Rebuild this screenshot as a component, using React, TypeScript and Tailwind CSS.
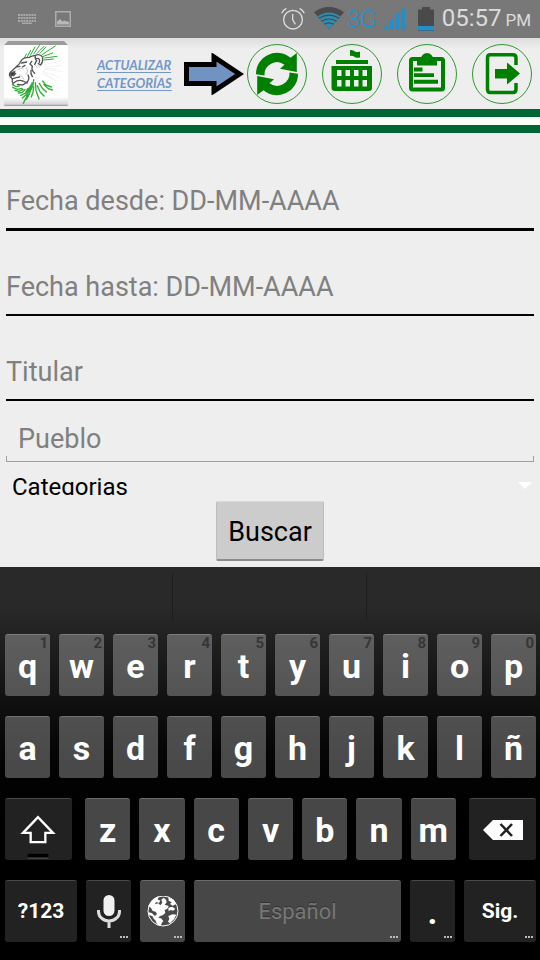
import type { ReactNode } from "react";

const NUMBER_ROW = ["q", "w", "e", "r", "t", "y", "u", "i", "o", "p"];
const HOME_ROW = ["a", "s", "d", "f", "g", "h", "j", "k", "l", "ñ"];
const BOTTOM_ROW = ["z", "x", "c", "v", "b", "n", "m"];

function StatusBar() {
  return (
    <div className="flex h-[38px] items-center bg-[#787878] pl-[18px] pr-[9px] text-[#dcdcdc]">
      <svg className="h-[10px] w-[18px]" viewBox="0 0 18 10" fill="none" stroke="#a9a9a9" strokeWidth="2">
        <path d="M0 1H18M0 4H18M0 7H18" strokeDasharray="2 0.7" />
        <path d="M4 9.3H14" strokeWidth="1.5" />
      </svg>
      <svg className="ml-[19px] h-4 w-4" viewBox="0 0 16 16">
        <rect x="0.75" y="0.75" width="14.5" height="14.5" fill="none" stroke="#adadad" strokeWidth="1.5" />
        <path d="M2 13.5V10.5L5 8L7.5 10.5L9.5 9.3L11 10.5L12.5 10L14 11.5V13.5Z" fill="#b8b8b8" />
      </svg>
      <div className="ml-auto flex items-center">
        <svg className="h-6 w-6" viewBox="38 24 72 72" fill="none" stroke="#dcdcdc" strokeWidth="4">
          <circle cx="74" cy="62" r="28" />
          <path d="M73 45V62L81 76M40 43A32 32 0 0 1 54 28M94 28A32 32 0 0 1 108 43" />
        </svg>
        <svg className="ml-[9px] h-[24px] w-[30px]" viewBox="135 19 90 72" fill="none">
          <path d="M180 86L135 35Q180 2 225 35Z" fill="#4b4b4b" />
          <path d="M180 86L146 47Q180 24 214 47Z" fill="#348bb0" />
          <path d="M150 53Q180 34 210 53M158 62Q180 48 202 62M166 71Q180 62 194 71" stroke="#404a50" strokeWidth="3.5" />
        </svg>
        <span className="ml-[3px] font-[Roboto,sans-serif] text-[24px] font-light leading-8 text-[#1f92d0]">3G</span>
        <svg className="ml-1 h-6 w-[25px]" viewBox="333 19 74 72" fill="#218fcb">
          <path d="M333 88L352 70V88ZM359 88V61L370 51V88ZM376 88V44L388 33V88ZM393 88V29L406 19V88Z" />
        </svg>
        <svg className="ml-3 h-6 w-4" viewBox="0 0 16 24">
          <path d="M0 2.5H4V0H12V2.5H16V24H0Z" fill="#4a4a4a" />
          <rect y="19" width="16" height="4.5" fill="#218fcb" />
        </svg>
        <span className="ml-2 flex items-baseline gap-1 font-[Roboto,sans-serif]">
          <span className="text-[24px] leading-8">05:57</span>
          <span className="text-[17px] leading-8">PM</span>
        </span>
      </div>
    </div>
  );
}

function LionLogo() {
  return (
    <svg className="h-[65px] w-16 shrink-0" viewBox="12 6 192 195" fill="none" strokeLinecap="round">
      <defs>
        <linearGradient id="logo-base" x1="0" y1="0" x2="0" y2="1">
          <stop offset="0" stopColor="#ffffff" />
          <stop offset="0.86" stopColor="#ffffff" />
          <stop offset="1" stopColor="#cccccc" />
        </linearGradient>
      </defs>
      <rect x="12" y="15" width="192" height="185" rx="5" fill="url(#logo-base)" />
      <path d="M12 18L24 6H192L204 18Z" fill="#9c9c9c" />
      <path d="M14 199H202" stroke="#999999" strokeWidth="3" />
      <g stroke="#ececec" strokeWidth="2">
        <path d="M132 70L165 54M134 77L184 66M134 84L187 80M132 91L186 97M130 98L180 115M128 104L172 128M136 88L166 90M134 102L160 122" />
      </g>
      <g stroke="#2fae35" strokeWidth="4">
        <path d="M73 57L79 45M82 53L92 34M91 49L105 24M101 45L119 18M111 43L132 22M120 43L138 24M126 47L166 21M130 52L158 42M134 57L171 52M132 63L160 60" strokeWidth="3" />
        <path d="M37 137L48 143L58 141M38 145L52 151L66 148M45 154L57 157L69 151M55 162L67 160L75 151M62 169L76 163L83 149M67 177L80 166L88 145M70 193L82 169L92 139M79 181L88 166L96 132M90 158L99 139L101 122M106 131L108 155L117 180M112 140L121 160L132 171M118 133L127 148L139 159M128 126L137 138L154 144M132 137L145 149L157 153M101 144L99 159L94 174" />
      </g>
      <g stroke="#555555" strokeWidth="4">
        <path d="M63 66Q69 55 87 55Q96 50 106 49M106 49Q120 43 128 55Q130 68 122 78L115 74M110 58Q121 57 118 70M106 49Q104 60 110 65L104 76M63 66Q59 76 49 83L30 101Q26 108 31 114M30 107L41 110L47 103M49 84L60 82M65 72L80 69M67 84L75 79M95 67L90 75L97 82M97 82Q93 94 104 103M33 115L36 120L49 116L59 114M37 121Q35 129 40 135M42 131Q55 121 69 126L82 132M52 136L68 138L83 128M84 108Q89 116 84 126M93 94Q91 103 97 113" />
        <path d="M31 103L44 98L42 107L34 111Z" fill="#303030" />
        <path d="M54 91Q64 84 70 90M58 107Q67 112 72 121M80 85L83 98L77 107M107 79L112 86M113 79L119 84" stroke="#aaaaaa" strokeWidth="2" />
      </g>
    </svg>
  );
}

function HeaderButton({ label, children }: { label: string; children: ReactNode }) {
  return (
    <button type="button" aria-label={label} className="size-[60px] shrink-0 rounded-full">
      <svg className="size-[60px]" viewBox="0 0 60 60" fill="#008000">
        <circle cx="30" cy="30" r="29.5" fill="none" stroke="#2f992f" />
        {children}
      </svg>
    </button>
  );
}

function Header() {
  const arc = "M9 30.3A21 21 0 0 1 43.500 13.800L49.8 9V28L33 24.800L37.500 20.800A12.500 12.500 0 0 0 17.500 31.500Z";
  return (
    <header>
      <div className="flex h-[71px] items-center bg-linear-to-b from-[#dedede] to-[#eeeeee] to-15% pl-1 pr-2">
        <LionLogo />
        <a
          href="#actualizar"
          className="ml-auto w-[84px] font-[Lato,sans-serif] text-[13px] font-bold italic leading-[18px] text-[#7397c8] underline underline-offset-2"
        >
          ACTUALIZAR CATEGORÍAS
        </a>
        <svg className="ml-[3px] h-[42px] w-[60px] shrink-0" viewBox="184 54 60 42">
          <path d="M186.5 65.5H214V58L239.5 75L214 92V84.500H186.5Z" fill="#7093c2" stroke="#000" strokeWidth="5" />
        </svg>
        <div className="ml-[3px] flex gap-[15px]">
          <HeaderButton label="Actualizar categorías">
            <path d={arc} />
            <path d={arc} transform="rotate(180 30 30)" />
          </HeaderButton>
          <HeaderButton label="Edificio">
            <path d="M28 6Q31 5.500 33 7.500Q35 8.500 38 7.500V13.500Q34 14.500 32 12.500Q30 11.500 28 12ZM14 16H46V20H14Z" />
            <path
              fillRule="evenodd"
              d="M9.500 22H50V44Q50 47 47 47H13Q9.500 47 9.500 44ZM15 26V32H19.500V26ZM23.500 26V32H28V26ZM32 26V32H36.500V26ZM40.500 26V32H45V26ZM15 36V42.500H19.500V36ZM23.500 36V42.500H28V36ZM32 36V42.500H36.500V36ZM40.500 36V42.500H45V36Z"
            />
          </HeaderButton>
          <HeaderButton label="Portapapeles">
            <rect x="14" y="15" width="32" height="30.500" rx="1.500" fill="none" stroke="#008000" strokeWidth="4" />
            <path
              fillRule="evenodd"
              d="M20 21.500V16H23Q25 9 30 9Q35 9 37 16H40V21.500ZM30 12.700A2.300 2.300 0 1 0 30 17.300A2.300 2.300 0 1 0 30 12.700Z"
            />
            <path d="M17 23.500H25.500V27.500H17ZM17 29.300H37V33H17ZM17 35.700H41V39.700H17Z" />
          </HeaderButton>
          <HeaderButton label="Salir">
            <path
              d="M44 21V14Q44 10.700 41 10.700H18Q15.500 10.700 15.500 14V45Q15.500 48.500 18 48.500H41Q44 48.500 44 45V39"
              fill="none"
              stroke="#008000"
              strokeWidth="3.500"
            />
            <path d="M23 25H35V18.500L48 29.500L35 40.500V34.500H23Z" />
          </HeaderButton>
        </div>
      </div>
      <div className="h-6 border-y-8 border-[#006633] bg-[#fbfffa]" />
    </header>
  );
}

function SearchForm() {
  const field =
    "box-content h-[54px] w-full border-black font-[Roboto,sans-serif] text-[27px] text-black outline-none placeholder:text-[#808080]";
  return (
    <form className="bg-[#eeeeee] pb-[6px] pt-[41px]">
      <div className="flex flex-col gap-[29px] px-[6px]">
        <input aria-label="Fecha desde" placeholder="Fecha desde: DD-MM-AAAA" className={`${field} border-b-3`} />
        <input aria-label="Fecha hasta" placeholder="Fecha hasta: DD-MM-AAAA" className={`${field} border-b-2`} />
        <input aria-label="Titular" placeholder="Titular" className={`${field} border-b-2`} />
      </div>
      <div className="relative mx-[6px] mt-[15px]">
        <input
          aria-label="Pueblo"
          placeholder="Pueblo"
          className="h-[46px] w-full px-3 font-[Roboto,sans-serif] text-[27px] text-black outline-none placeholder:text-[#808080]"
        />
        <span className="pointer-events-none absolute inset-x-0 bottom-0 h-[6px] border-x border-b border-[#a0a0a0]" />
      </div>
      <div className="relative h-[33px] overflow-hidden">
        <select
          aria-label="Categorias"
          className="h-[50px] w-full appearance-none px-3 font-[Roboto,sans-serif] text-[24px] text-black outline-none"
        >
          <option>Categorias</option>
        </select>
        <svg className="pointer-events-none absolute right-2 top-5 h-[7px] w-[14px]" viewBox="0 0 14 7" fill="#fff">
          <path d="M0 0H14L7 7Z" />
        </svg>
      </div>
      <button
        type="button"
        className="mx-auto mt-[6px] block h-[60px] rounded-xs border-x border-b-2 border-t border-x-[#bdbdbd] border-b-[#8c8c8c] border-t-[#dadada] bg-[#cccccc] px-[11px] pt-1 font-[Roboto,sans-serif] text-[27px] text-black"
      >
        Buscar
      </button>
    </form>
  );
}

type KeyProps = {
  children: ReactNode;
  dark?: boolean;
  hint?: string;
  more?: boolean;
  label?: string;
};

function Key({ children, dark, hint, more, label }: KeyProps) {
  const tone = dark ? "bg-[#222222] border-[#484848]" : "bg-white/28 border-white/20";
  return (
    <button
      type="button"
      aria-label={label}
      className={`relative flex h-[62px] min-w-0 flex-1 items-center justify-center rounded-[3px] border-t ${tone}`}
    >
      {children}
      {hint && <span className="absolute right-[2px] top-0 text-[15px] font-bold leading-4 text-[#363636]">{hint}</span>}
      {more && (
        <span className="absolute bottom-1 right-[3px] flex gap-px">
          <span className="size-[2px] bg-[#bbbbbb]" />
          <span className="size-[2px] bg-[#bbbbbb]" />
          <span className="size-[2px] bg-[#bbbbbb]" />
        </span>
      )}
    </button>
  );
}

function Letter({ children }: { children: ReactNode }) {
  return <span className="text-[34px] font-bold leading-10">{children}</span>;
}

function Keyboard() {
  return (
    <section
      aria-label="Teclado"
      className="flex-1 bg-linear-to-b from-[#292929] from-10% to-black to-75% pb-[18px] font-[Roboto,sans-serif] text-white"
    >
      <div className="grid h-[54px] grid-cols-[172fr_194fr_174fr] pt-[6px]">
        <span />
        <span className="border-l border-[#1d1d1d]" />
        <span className="border-l border-[#1d1d1d]" />
      </div>
      <div className="flex flex-col gap-5 pl-[5px] pr-1 pt-[13px]">
        <div className="flex gap-[9px]">
          {NUMBER_ROW.map((k, i) => (
            <Key key={k} hint={String((i + 1) % 10)}>
              <Letter>{k}</Letter>
            </Key>
          ))}
        </div>
        <div className="flex gap-[9px]">
          {HOME_ROW.map((k) => (
            <Key key={k}>
              <Letter>{k}</Letter>
            </Key>
          ))}
        </div>
        <div className="grid grid-cols-[67fr_371fr_67fr] gap-[13px]">
          <Key dark label="Mayúsculas">
            <svg className="size-full" viewBox="15 27 201 180" fill="none">
              <path d="M114 80L69 127H92V155H136V127H159Z" stroke="#fff" strokeWidth="7" />
              <path d="M83 190H145V201H83Z" fill="#000" />
              <path d="M83 203H145" stroke="#555" strokeWidth="3" />
            </svg>
          </Key>
          <div className="flex gap-[9px]">
            {BOTTOM_ROW.map((k) => (
              <Key key={k}>
                <Letter>{k}</Letter>
              </Key>
            ))}
          </div>
          <Key dark label="Borrar">
            <svg className="h-5 w-10" viewBox="0 0 40 20">
              <path d="M0 10L10 0H40V20H10Z" fill="#fff" />
              <path d="M17.500 4L29 16M29 4L17.500 16" stroke="#222" strokeWidth="2.500" />
            </svg>
          </Key>
        </div>
        <div className="grid grid-cols-[72fr_45fr_45fr_207fr_45fr_72fr] gap-[9px]">
          <Key dark>
            <span className="text-[21px] font-bold">?123</span>
          </Key>
          <Key dark more label="Dictado">
            <svg className="h-[33px] w-6" viewBox="0 0 24 33">
              <rect x="6.500" width="11" height="21" rx="5.500" fill="#f0f0f0" />
              <path d="M1.500 15V16.500A10.500 9.500 0 0 0 22.500 16.500V15M12 26V33" fill="none" stroke="#ddd" strokeWidth="3" />
            </svg>
          </Key>
          <Key more label="Idioma">
            <svg className="size-8" viewBox="438 315 96 96">
              <circle cx="486" cy="360" r="45" fill="#4a4a4a" stroke="#fff" strokeWidth="3" />
              <path
                fill="#fff"
                d="M442 345L451 330L460 322L474 316L470 325L478 329L474 336L466 333L461 340L472 337L478 343L484 335L481 326L488 320L495 326L497 334L491 341L503 345L499 353L491 357L493 366L485 373L477 375L472 381L480 382L487 390L482 397L479 405L468 400L464 389L457 382L454 375L445 373L443 364L452 366L462 375L468 369L464 362L455 360L450 351ZM502 317L518 326L526 339L515 344L507 339L512 334L503 329ZM502 350L514 347L523 354L516 359L509 357L503 361ZM502 375L515 370L526 371L519 385L507 397L501 392L505 384Z"
              />
            </svg>
          </Key>
          <Key more label="Espacio">
            <span className="text-[22px] text-[#777777] [text-shadow:0_-1px_0_#333333]">Español</span>
          </Key>
          <Key dark more>
            <Letter>.</Letter>
          </Key>
          <Key dark more>
            <span className="text-[21px] font-bold">Sig.</span>
          </Key>
        </div>
      </div>
    </section>
  );
}

export default function App() {
  return (
    <div className="flex min-h-screen flex-col bg-[#eeeeee]">
      <StatusBar />
      <Header />
      <SearchForm />
      <Keyboard />
    </div>
  );
}
